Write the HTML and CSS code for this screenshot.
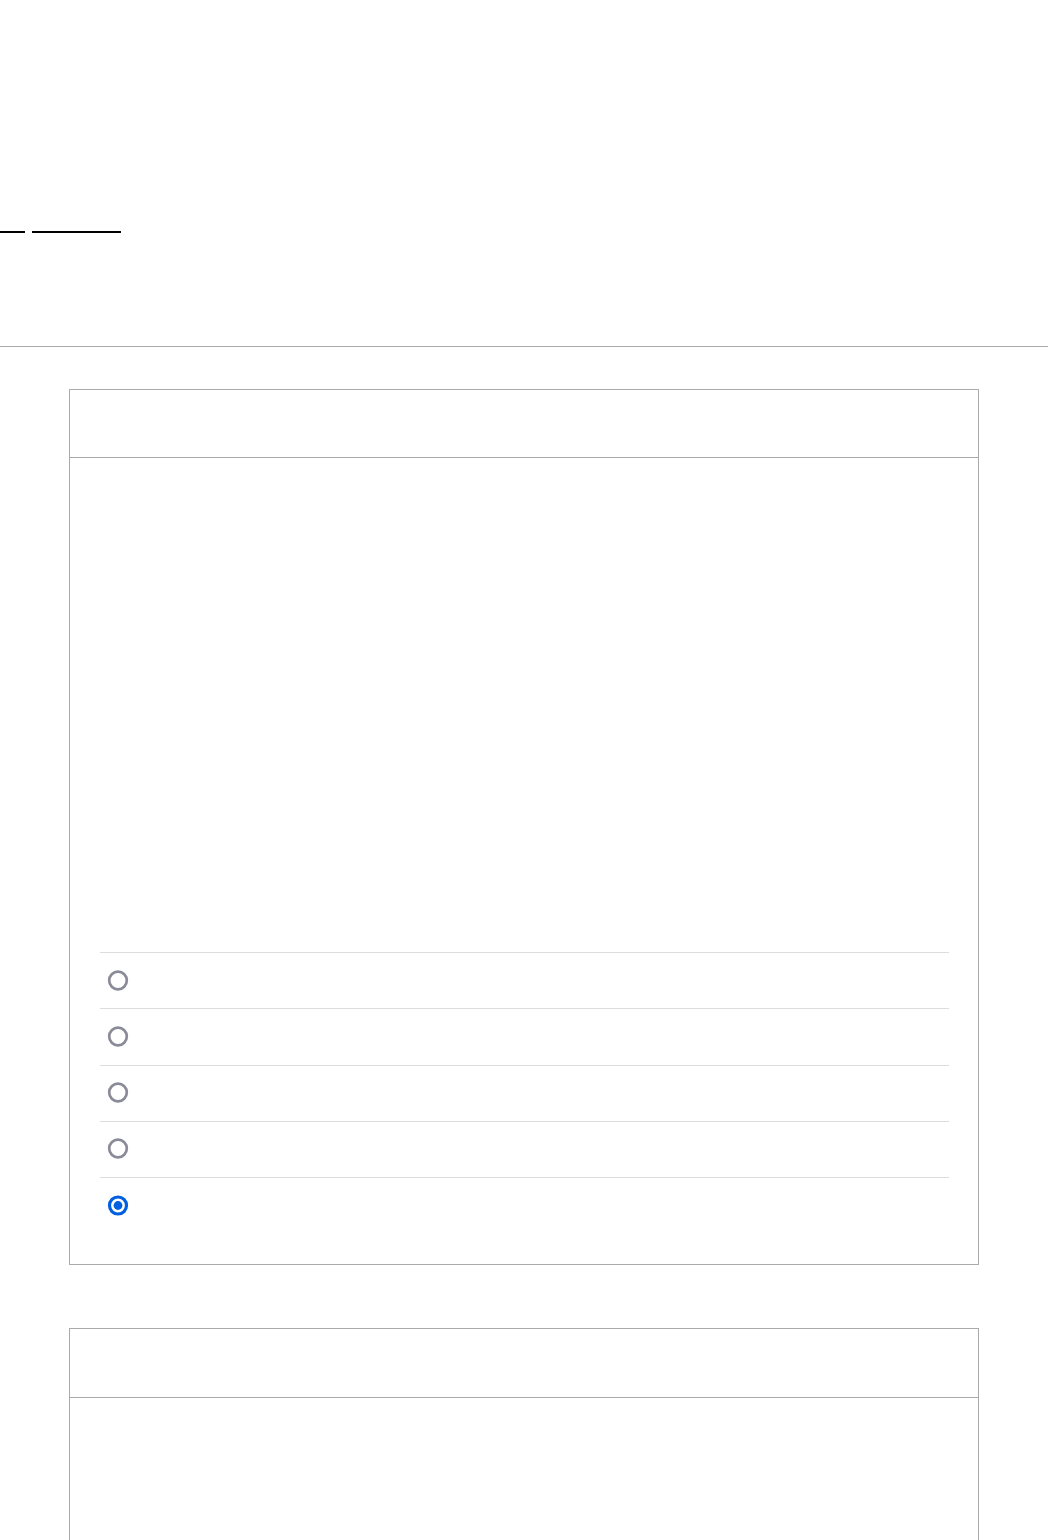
FILE: index.html
```html
<!DOCTYPE html>
<html lang="en">
<head>
<meta charset="utf-8">
<title>Options</title>
<link rel="stylesheet" href="styles.css">
</head>
<body>
<header class="top">
  <nav class="links">
    <span class="link link-a"></span>
    <span class="link link-b"></span>
  </nav>
</header>
<main class="main">
  <section class="card">
    <div class="card-head"></div>
    <div class="card-body">
      <div class="spacer"></div>
      <ul class="options">
        <li class="option"><svg class="radio" viewBox="0 0 22 22"><circle cx="11" cy="10.5" r="8.8" fill="#fff" stroke="#8a8a98" stroke-width="2.7"/></svg></li>
        <li class="option"><svg class="radio" viewBox="0 0 22 22"><circle cx="11" cy="10.5" r="8.8" fill="#fff" stroke="#8a8a98" stroke-width="2.7"/></svg></li>
        <li class="option"><svg class="radio" viewBox="0 0 22 22"><circle cx="11" cy="10.5" r="8.8" fill="#fff" stroke="#8a8a98" stroke-width="2.7"/></svg></li>
        <li class="option"><svg class="radio" viewBox="0 0 22 22"><circle cx="11" cy="10.5" r="8.8" fill="#fff" stroke="#8a8a98" stroke-width="2.7"/></svg></li>
        <li class="option"><svg class="radio" viewBox="0 0 22 22"><circle cx="11" cy="10.5" r="8.5" fill="#fff" stroke="#0060df" stroke-width="3.2"/><circle cx="11" cy="10.5" r="4.4" fill="#0060df"/></svg></li>
      </ul>
    </div>
  </section>
  <section class="card">
    <div class="card-head card-head-2"></div>
    <div class="card-body card-body-2"></div>
  </section>
</main>
</body>
</html>
```

FILE: styles.css
```css
* { box-sizing: border-box; }
html, body { margin: 0; padding: 0; background: #fff; }
body { font-family: "Liberation Sans", Arial, sans-serif; color: #000; }

.top {
  height: 347px;
  border-bottom: 1px solid #aaaaaa;
  padding-top: 231px;
}
.links {
  display: flex;
  gap: 7px;
}
.link {
  display: block;
  height: 2px;
  background: #000;
}
.link-a { width: 25px; }
.link-b { width: 89px; }

.main {
  display: flex;
  flex-direction: column;
  align-items: center;
  gap: 63px;
  padding-top: 42px;
}
.card {
  width: 910px;
  border: 1px solid #aaaaaa;
}
.card-head {
  height: 68px;
  border-bottom: 1px solid #aaaaaa;
}
.card-head-2 { height: 69px; }
.card-body {
  padding: 30px 29px 31px 30px;
}
.spacer { height: 464px; }
.card-body-2 { height: 300px; }

.options {
  list-style: none;
  margin: 0;
  padding: 0;
}
.option {
  height: 56.25px;
  border-top: 1px solid #dddddd;
  display: flex;
  align-items: center;
  padding-left: 7px;
}
.radio {
  width: 22px;
  height: 22px;
  display: block;
}
```
